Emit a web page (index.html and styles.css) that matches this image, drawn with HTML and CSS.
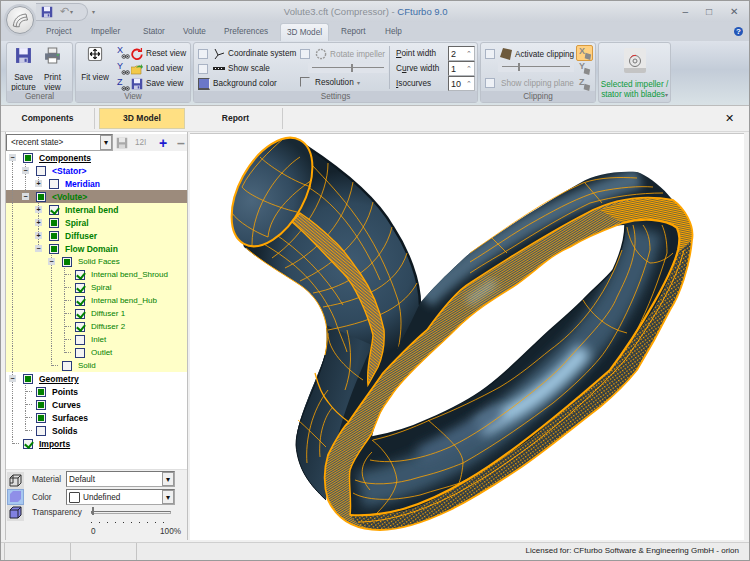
FILE: index.html
```html
<!DOCTYPE html>
<html lang="en">
<head>
    <meta charset="UTF-8">
    <title>Volute3.cft (Compressor) - CFturbo 9.0</title>
    <link rel="stylesheet" href="styles.css">
</head>
<body>
<svg class="defs">
    <symbol id="floppy" viewBox="0 0 16 16">
        <path d="M1 1h14v14H1z" fill="#4a4fa8"/>
        <path d="M4 1h8v6H4z" fill="#eef"/>
        <path d="M4 10h8v5H4z" fill="#c9cbe6"/>
        <path d="M9 11h2v3H9z" fill="#4a4fa8"/>
    </symbol>
    <symbol id="eyes" viewBox="0 0 10 6">
        <circle cx="3" cy="3" r="2.2" fill="none" stroke="#333"/>
        <circle cx="7.4" cy="3" r="2.2" fill="none" stroke="#333"/>
        <circle cx="3" cy="3" r="1" fill="#333"/>
        <circle cx="7.4" cy="3" r="1" fill="#333"/>
    </symbol>
    <symbol id="tile" viewBox="0 0 14 14">
        <path d="M6 5l6 2-1 6-6-2z" fill="#8a8a8a"/>
    </symbol>
</svg>

<div class="window">
    <div class="logo">
        <svg width="24" height="24" viewBox="0 0 24 24" fill="none" stroke="#777" stroke-width="1.2">
            <path d="M3 20C4 11 9 5 20 4M7 21C7 14 11 9 21 8M11 21C11 16 14 12 22 12M3 20L7 21L11 21M20 4L21 8L22 12"/>
        </svg>
    </div>

    <div class="titlebar">
        <div class="quick">
            <svg class="ico12"><use href="#floppy"/></svg>
            <span class="undo">&#8630;</span>
            <span class="small-arrow">&#9662;</span>
        </div>
        <span class="small-arrow qa-more">&#9662;</span>
        <div class="title">Volute3.cft (Compressor) - <span class="title-app">CFturbo 9.0</span></div>
        <div class="winbtns"><span>&#8211;</span><span>&#9633;</span><span>&#10005;</span></div>
    </div>

    <div class="tabs">
        <span class="tab t-project">Project</span>
        <span class="tab t-impeller">Impeller</span>
        <span class="tab t-stator">Stator</span>
        <span class="tab t-volute">Volute</span>
        <span class="tab t-prefs">Preferences</span>
        <span class="tab active">3D Model</span>
        <span class="tab t-report">Report</span>
        <span class="tab t-help">Help</span>
        <span class="help-btn">?</span>
    </div>

    <div class="ribbon">
        <div class="group g-general">
            <div class="group-body">
                <div class="bigbtn">
                    <svg class="ico16"><use href="#floppy"/></svg>
                    <span>Save<br>picture</span>
                </div>
                <div class="bigbtn">
                    <svg class="ico16" viewBox="0 0 16 16">
                        <path d="M4 1h8v5H4z" fill="#eee" stroke="#777"/>
                        <path d="M1 6h14v6H1z" fill="#6d7686"/>
                        <path d="M4 10h8v5H4z" fill="#fff" stroke="#777"/>
                        <path d="M12 7h2v1h-2z" fill="#4c4"/>
                    </svg>
                    <span>Print<br>view</span>
                </div>
            </div>
            <div class="group-label">General</div>
        </div>

        <div class="group g-view">
            <div class="group-body">
                <div class="bigbtn fit">
                    <svg class="ico16 fit-ico" viewBox="0 0 16 16" fill="none" stroke="#111" stroke-width="1.3">
                        <rect x="0.5" y="0.5" width="15" height="15" rx="2" fill="#fff" stroke="#777"/>
                        <path d="M8 2.500v11M2.500 8h11M8 2.500l-2 2M8 2.500l2 2M8 13.500l-2-2M8 13.500l2-2M2.500 8l2-2M2.500 8l2 2M13.500 8l-2-2M13.500 8l-2 2"/>
                    </svg>
                    <span>Fit view</span>
                </div>
                <div class="axes">
                    <div class="axis"><b>X</b><svg class="eyes"><use href="#eyes"/></svg></div>
                    <div class="axis"><b>Y</b><svg class="eyes"><use href="#eyes"/></svg></div>
                    <div class="axis"><b>Z</b><svg class="eyes"><use href="#eyes"/></svg></div>
                </div>
                <div class="col">
                    <div class="line">
                        <svg class="ico12" viewBox="0 0 12 12" fill="none" stroke="#e01818" stroke-width="1.8"><path d="M9.500 3A4.800 4.800 0 1 0 10.800 6.500"/><path d="M7 3.400h3.400V0" stroke-width="1.3"/></svg>
                        Reset view
                    </div>
                    <div class="line">
                        <svg class="ico12" viewBox="0 0 12 12"><path d="M0 4h4l1-1h5v8H0z" fill="#f2c94a" stroke="#a8842a" stroke-width=".6"/><path d="M5 5c2-3 4-3 5-2V1l2 3-2 2V4.500C8 4 6 4 5 5z" fill="#3aa03a"/></svg>
                        Load view
                    </div>
                    <div class="line">
                        <svg class="ico12"><use href="#floppy"/></svg>
                        Save view
                    </div>
                </div>
            </div>
            <div class="group-label">View</div>
        </div>

        <div class="group g-settings">
            <div class="group-body">
                <div class="col set-1">
                    <div class="line">
                        <span class="rcheck"></span>
                        <svg class="ico12" viewBox="0 0 12 12" fill="none" stroke="#222"><path d="M2 1l3 6 6-2M5 7l-3 4"/></svg>
                        Coordinate system
                    </div>
                    <div class="line">
                        <span class="rcheck"></span>
                        <svg class="ico12" viewBox="0 0 12 12"><path d="M0 4h12v3H0z" fill="#222"/><path d="M2 5h1v1H2zM5 5h1v1H5zM8 5h1v1H8z" fill="#fff"/></svg>
                        Show scale
                    </div>
                    <div class="line bg-color">
                        <span class="swatch"></span>
                        Background color
                    </div>
                </div>
                <div class="col set-2">
                    <div class="line dim">
                        <span class="rcheck"></span>
                        <svg class="ico12" viewBox="0 0 12 12" fill="none" stroke="#999" stroke-width="1.4" stroke-dasharray="2 1"><circle cx="6" cy="6" r="4.600"/></svg>
                        Rotate impeller
                    </div>
                    <div class="slider set-slider"><i></i></div>
                    <div class="line res">
                        <span class="rcheck corner"></span>
                        Resolution <span class="small-arrow">&#9662;</span>
                    </div>
                </div>
                <div class="col set-3">
                    <div class="line spin-row"><span><u>P</u>oint width</span><span class="spin">2</span></div>
                    <div class="line spin-row"><span>C<u>u</u>rve width</span><span class="spin">1</span></div>
                    <div class="line spin-row"><span><u>I</u>socurves</span><span class="spin">10</span></div>
                </div>
            </div>
            <div class="group-label">Settings</div>
        </div>

        <div class="group g-clip">
            <div class="group-body">
                <div class="col clip-main">
                    <div class="line">
                        <span class="rcheck"></span>
                        <svg class="ico12" viewBox="0 0 12 12"><path d="M3 0l9 2-2 10-10-3z" fill="#6e5a3c"/></svg>
                        Activate clipping
                    </div>
                    <div class="slider clip-slider"><i></i></div>
                    <div class="line dim">
                        <span class="rcheck"></span>
                        Show clipping plane
                    </div>
                </div>
                <div class="clip-axes">
                    <div class="clip-axis on"><b>X</b><svg class="tile"><use href="#tile"/></svg></div>
                    <div class="clip-axis"><b>Y</b><svg class="tile"><use href="#tile"/></svg></div>
                    <div class="clip-axis"><b>Z</b><svg class="tile"><use href="#tile"/></svg></div>
                </div>
            </div>
            <div class="group-label">Clipping</div>
        </div>

        <div class="group g-selected">
            <div class="sel-btn">
                <svg width="14" height="14" viewBox="0 0 14 14" fill="none" stroke="#777"><circle cx="7" cy="7" r="5.500"/><circle cx="7" cy="7" r="2"/><path d="M2.500 3.500A6 6 0 0 1 8 1.300" stroke="#d33"/></svg>
            </div>
            <div class="sel-text">Selected impeller /<br>stator with blades<span class="small-arrow">&#9662;</span></div>
        </div>
    </div>

    <div class="viewtabs">
        <div class="vtab vt-comp">Components</div>
        <div class="vtab vt-3d">3D Model</div>
        <div class="vtab vt-report">Report</div>
        <div class="vclose">&#10005;</div>
    </div>

    <div class="main">
        <div class="left">
            <div class="tool-row">
                <div class="combo state-combo"><span>&lt;recent state&gt;</span><span class="combo-arrow">&#9662;</span></div>
                <svg class="ico12 tool-save" viewBox="0 0 16 16"><path d="M1 1h14v14H1z" fill="#a9a9a9"/><path d="M4 1h8v6H4z" fill="#e8e8e8"/><path d="M4 10h8v5H4z" fill="#d8d8d8"/></svg>
                <span class="tool-num">12I</span>
                <span class="tool-plus">+</span>
                <span class="tool-minus">&#8211;</span>
            </div>

            <div class="tree">
                <div class="row"><i class="t m first"></i><span class="cb mixed"></span><span class="lbl root">Components</span></div>
                <div class="row"><i class="t v"></i><i class="t m"></i><span class="cb"></span><span class="lbl blue">&lt;Stator&gt;</span></div>
                <div class="row"><i class="t v"></i><i class="t v"></i><i class="t p last"></i><span class="cb"></span><span class="lbl blue">Meridian</span></div>
                <div class="row sel"><i class="t v"></i><i class="t m last"></i><span class="cb mixed"></span><span class="lbl green">&lt;Volute&gt;</span></div>
                <div class="row hl"><i class="t v"></i><i class="t"></i><i class="t p"></i><span class="cb checked"></span><span class="lbl green">Internal bend</span></div>
                <div class="row hl"><i class="t v"></i><i class="t"></i><i class="t p"></i><span class="cb mixed"></span><span class="lbl green">Spiral</span></div>
                <div class="row hl"><i class="t v"></i><i class="t"></i><i class="t p"></i><span class="cb mixed"></span><span class="lbl green">Diffuser</span></div>
                <div class="row hl"><i class="t v"></i><i class="t"></i><i class="t m last"></i><span class="cb mixed"></span><span class="lbl green">Flow Domain</span></div>
                <div class="row hl"><i class="t v"></i><i class="t"></i><i class="t"></i><i class="t m"></i><span class="cb mixed"></span><span class="lbl leaf">Solid Faces</span></div>
                <div class="row hl"><i class="t v"></i><i class="t"></i><i class="t"></i><i class="t v"></i><i class="t b"></i><span class="cb checked"></span><span class="lbl leaf">Internal bend_Shroud</span></div>
                <div class="row hl"><i class="t v"></i><i class="t"></i><i class="t"></i><i class="t v"></i><i class="t b"></i><span class="cb checked"></span><span class="lbl leaf">Spiral</span></div>
                <div class="row hl"><i class="t v"></i><i class="t"></i><i class="t"></i><i class="t v"></i><i class="t b"></i><span class="cb checked"></span><span class="lbl leaf">Internal bend_Hub</span></div>
                <div class="row hl"><i class="t v"></i><i class="t"></i><i class="t"></i><i class="t v"></i><i class="t b"></i><span class="cb checked"></span><span class="lbl leaf">Diffuser 1</span></div>
                <div class="row hl"><i class="t v"></i><i class="t"></i><i class="t"></i><i class="t v"></i><i class="t b"></i><span class="cb checked"></span><span class="lbl leaf">Diffuser 2</span></div>
                <div class="row hl"><i class="t v"></i><i class="t"></i><i class="t"></i><i class="t v"></i><i class="t b"></i><span class="cb"></span><span class="lbl leaf">Inlet</span></div>
                <div class="row hl"><i class="t v"></i><i class="t"></i><i class="t"></i><i class="t v"></i><i class="t l"></i><span class="cb"></span><span class="lbl leaf">Outlet</span></div>
                <div class="row hl"><i class="t v"></i><i class="t"></i><i class="t"></i><i class="t l"></i><span class="cb"></span><span class="lbl leaf">Solid</span></div>
                <div class="row"><i class="t m"></i><span class="cb mixed"></span><span class="lbl root">Geometry</span></div>
                <div class="row"><i class="t v"></i><i class="t b"></i><span class="cb mixed"></span><span class="lbl strong">Points</span></div>
                <div class="row"><i class="t v"></i><i class="t b"></i><span class="cb mixed"></span><span class="lbl strong">Curves</span></div>
                <div class="row"><i class="t v"></i><i class="t b"></i><span class="cb mixed"></span><span class="lbl strong">Surfaces</span></div>
                <div class="row"><i class="t v"></i><i class="t l"></i><span class="cb"></span><span class="lbl strong">Solids</span></div>
                <div class="row"><i class="t l"></i><span class="cb checked"></span><span class="lbl root">Imports</span></div>
            </div>

            <div class="props">
                <div class="prop-icons">
                    <svg width="13" height="13" viewBox="0 0 13 13" fill="none" stroke="#333"><path d="M1 4h8v8H1zM1 4l3-3h8v8l-3 3M9 4l3-3M4 1v8H1"/></svg>
                    <span class="prop-on"><svg width="13" height="13" viewBox="0 0 13 13"><path d="M1 4l3-3h8v8l-3 3H1z" fill="#8f8fe8"/></svg></span>
                    <svg width="13" height="13" viewBox="0 0 13 13"><path d="M1 4l3-3h8v8l-3 3H1z" fill="#8080e0" stroke="#223"/><path d="M1 4h8v8M9 4l3-3" fill="none" stroke="#223"/></svg>
                </div>
                <div class="prop-fields">
                    <div class="prop-row"><span class="prop-label">Material</span><div class="combo prop-combo"><span>Default</span><span class="combo-arrow">&#9662;</span></div></div>
                    <div class="prop-row"><span class="prop-label">Color</span><div class="combo prop-combo"><span class="color-box"></span><span>Undefined</span><span class="combo-arrow">&#9662;</span></div></div>
                    <div class="prop-row trans"><span class="prop-label">Transparency</span>
                        <div class="trans-track">
                            <div class="trans-line"></div>
                            <div class="trans-ticks"></div>
                            <div class="trans-scale"><span>0</span><span>100%</span></div>
                        </div>
                    </div>
                </div>
            </div>
        </div>

        <div class="viewport">
            <svg class="model" viewBox="190 134 554 406">
                <defs>
                    <pattern id="hatch" width="2" height="2" patternUnits="userSpaceOnUse" patternTransform="rotate(-32)">
                        <rect width="2" height="2" fill="#3d5467"/>
                        <rect width="2" height="0.8" fill="#ffa500"/>
                    </pattern>
                    <pattern id="seam" width="2.400" height="2.400" patternUnits="userSpaceOnUse" patternTransform="rotate(40)">
                        <rect width="2.400" height="2.400" fill="#6d6a5c"/>
                        <rect width="2.400" height="1" fill="#e89a10"/>
                    </pattern>
                    <pattern id="speck" width="3" height="3" patternUnits="userSpaceOnUse" patternTransform="rotate(-35)">
                        <rect width="3" height="3" fill="#2b3b47"/>
                        <rect width="1.400" height="1.400" fill="#ffa500"/>
                    </pattern>
                    <pattern id="dense" width="3" height="2" patternUnits="userSpaceOnUse" patternTransform="rotate(12)">
                        <rect width="3" height="2" fill="#5a5a40"/>
                        <rect width="3" height="1.200" fill="#ffa500"/>
                    </pattern>
                    <radialGradient id="faceFill" gradientUnits="userSpaceOnUse" cx="255" cy="178" r="70">
                        <stop offset="0" stop-color="#4b667c"/>
                        <stop offset="0.6" stop-color="#324b60"/>
                        <stop offset="1" stop-color="#182833"/>
                    </radialGradient>
                    <radialGradient id="elbowFill" gradientUnits="userSpaceOnUse" cx="350" cy="265" r="95">
                        <stop offset="0" stop-color="#3f5b72"/>
                        <stop offset="0.65" stop-color="#2f485c"/>
                        <stop offset="1" stop-color="#14222c"/>
                    </radialGradient>
                    <linearGradient id="lowerElbow" gradientUnits="userSpaceOnUse" x1="300" y1="420" x2="380" y2="440">
                        <stop offset="0" stop-color="#1a2b38"/>
                        <stop offset="0.5" stop-color="#2b4254"/>
                        <stop offset="1" stop-color="#15242e"/>
                    </linearGradient>
                    <filter id="blur6" x="-30%" y="-30%" width="160%" height="160%"><feGaussianBlur stdDeviation="6"/></filter>
                    <filter id="blur4" x="-30%" y="-30%" width="160%" height="160%"><feGaussianBlur stdDeviation="4"/></filter>
                    <clipPath id="ringClip">
                        <path d="M420 303C440 280 460 262 470 253C510 225 550 200 580 183C595 175 610 171 637 172C655 178 685 205 692 240C690 265 680 295 670 310C655 340 640 365 637 370C625 385 612 397 600 407C570 430 540 455 517 470C490 488 470 500 450 510C425 522 400 530 380 530C350 530 335 515 328 500C322 480 325 465 328 455C335 440 345 425 348 423C360 405 375 385 383 373C395 355 410 325 420 303Z"/>
                    </clipPath>
                </defs>

                <!-- elbow -->
                <path d="M306 146C335 165 375 195 393 227C408 250 420 280 420 305C420 330 400 360 378 385L350 425L330 460L326 500C310 485 298 470 296 445C296 420 315 385 325 355C332 325 322 300 300 285C285 275 262 262 244 247L236 225Z" fill="url(#elbowFill)"/>
                <path d="M372 345C355 385 335 425 326 500C310 485 298 470 296 445C296 420 315 385 325 355C327 345 327 335 326 325Z" fill="url(#lowerElbow)"/>
                <path d="M306 146C335 165 375 195 393 227C408 250 420 280 420 305" fill="none" stroke="#0d1820" stroke-width="2.500"/>
                <path d="M246 248C262 262 285 275 300 285C322 300 332 325 325 355" fill="none" stroke="#ffa500" stroke-width="1"/>
                <path d="M325 355C318 385 296 420 296 445C298 470 310 485 326 500" fill="none" stroke="#0d1820" stroke-width="1"/>

                <!-- elbow wireframe -->
                <g fill="none" stroke="#ffa500" stroke-width="0.8">
                    <path d="M328 163C328 195 305 235 272 258"/>
                    <path d="M353 182C345 230 306 258 285 268"/>
                    <path d="M373 202C365 240 330 267 300 281"/>
                    <path d="M392 227C383 265 347 287 313 293"/>
                    <path d="M407 253C397 285 363 300 323 307"/>
                    <path d="M417 283C405 305 380 320 328 330"/>
                    <path d="M312 165C340 195 375 230 398 300C402 315 402 330 398 350"/>
                    <path d="M306 186C340 205 365 245 380 280"/>
                    <path d="M262 243C295 262 320 285 335 320C340 335 345 345 347 352"/>
                    <path d="M272 232C300 250 325 275 343 305"/>
                    <path d="M347 330C352 350 352 370 345 390"/>
                    <path d="M328 333C328 350 345 368 363 380"/>
                    <path d="M307 463C305 440 312 410 328 390"/>
                    <path d="M320 457C318 435 325 415 333 407"/>
                    <path d="M298 420C307 428 316 437 326 447"/>
                </g>
                <path d="M315 373C318 385 322 395 328 402C335 412 343 418 350 423" fill="none" stroke="#ffa500" stroke-width="1.300"/>

                <!-- elbow seam strip -->
                <path d="M300 213C315 223 325 232 333 240C345 250 352 263 360 273C372 290 380 310 384 330C385 345 382 358 378 367L368 385C366 365 372 350 373 335C368 315 355 285 343 273C325 255 308 235 292 222Z" fill="url(#seam)" stroke="#ffa500" stroke-width="1.400"/>

                <!-- inlet face -->
                <g transform="rotate(-61.600 272 192)">
                    <ellipse cx="272" cy="192" rx="59" ry="33" fill="url(#faceFill)" stroke="#ffa500" stroke-width="2"/>
                </g>
                <g fill="none" stroke="#ffa500" stroke-width="0.8">
                    <path d="M260 157C268 165 290 180 311 187"/>
                    <path d="M242 187C248 195 275 207 297 212"/>
                    <path d="M232 213C238 222 255 232 268 237"/>
                    <path d="M300 157C280 170 252 205 252 245"/>
                    <path d="M312 180C290 195 270 215 268 237"/>
                    <path d="M283 139C270 150 250 170 242 187"/>
                </g>

                <!-- ring tube -->
                <g clip-path="url(#ringClip)">
                    <rect x="300" y="150" width="400" height="390" fill="#14222c"/>
                    <path d="M360 490C420 480 490 440 560 370C600 330 630 290 645 230" fill="none" stroke="#3a566c" stroke-width="36" filter="url(#blur6)"/>
                    <path d="M425 300C470 255 550 205 640 178" fill="none" stroke="#4a667c" stroke-width="20" filter="url(#blur4)"/>
                    <path d="M480 428C515 412 550 392 585 350" fill="none" stroke="#a4cce6" stroke-width="16" filter="url(#blur6)"/>
                    <path d="M420 455C450 440 475 430 500 410" fill="none" stroke="#44607a" stroke-width="14" filter="url(#blur6)"/>
                </g>

                <!-- hole of the ring -->
                <path d="M372 437C395 433 410 428 427 420C450 410 470 400 487 387C510 370 530 348 550 330C565 317 575 308 583 300C595 287 605 280 613 270C620 255 625 240 625 225C600 226 590 235 570 247C550 255 535 272 513 287C495 298 475 310 455 330C435 350 410 370 393 393C385 403 375 420 372 437Z" fill="#fff"/>
                <path d="M372 437C395 433 410 428 427 420C450 410 470 400 487 387C510 370 530 348 550 330C565 317 575 308 583 300C595 287 605 280 613 270C620 255 625 240 625 225" fill="none" stroke="#0e1a22" stroke-width="1.500"/>

                <!-- ring wireframe -->
                <g fill="none" stroke="#ffa500" stroke-width="0.8">
                    <path d="M373 440C395 435 412 428 430 420C455 410 480 398 500 387C520 375 535 362 550 350C575 332 605 300 622 250"/>
                    <path d="M370 460C395 465 425 458 450 447C475 435 495 420 513 407C535 390 555 375 570 357C590 335 610 315 617 297C628 275 640 250 633 225"/>
                    <path d="M355 480C370 486 395 485 420 477C440 472 450 468 463 463C500 442 530 420 553 403C575 385 590 370 600 358C615 340 640 290 650 250C650 240 648 232 643 225"/>
                    <path d="M353 493C365 500 390 502 420 495C435 490 445 488 460 483C490 468 515 450 540 433C565 412 590 395 605 380C625 358 650 310 667 253C667 240 665 232 662 225"/>
                    <path d="M372 440C385 450 395 465 397 480C396 492 385 505 377 513"/>
                    <path d="M372 452C362 462 357 475 370 490"/>
                    <path d="M428 420C445 435 463 450 463 463C462 475 460 482 457 487"/>
                    <path d="M583 300C590 312 605 328 627 333"/>
                    <path d="M627 227C630 245 640 258 650 263C660 263 668 258 673 253"/>
                    <path d="M470 253C510 225 545 200 583 183C600 177 620 177 637 178"/>
                    <path d="M470 262C490 250 515 232 537 220C560 207 580 197 597 192C620 187 640 186 653 187"/>
                    <path d="M470 273C485 263 500 255 513 247C540 230 565 215 590 203C615 196 640 193 663 193"/>
                    <path d="M492 238L507 253"/>
                    <path d="M585 183L602 203"/>
                </g>

                <!-- ring band -->
                <path fill-rule="evenodd" fill="url(#hatch)" d="M427 330C445 305 458 290 470 283C490 270 550 232 587 213C610 201 640 194 673 200C684 208 695 225 692 240C690 265 680 295 670 310C655 340 640 365 637 370C625 385 612 397 600 407C570 430 540 455 517 470C490 488 470 500 450 510C425 522 400 530 380 530C350 530 335 515 328 500C322 480 325 465 328 455C335 440 345 425 348 423C360 405 375 385 383 373C400 355 415 340 427 330ZM455 330C475 310 495 298 513 287C535 272 550 255 570 247C590 235 610 228 623 223C640 218 665 218 677 228C682 240 680 250 678 253C672 275 660 298 653 310C640 330 625 352 610 370C600 380 570 405 533 437C510 455 485 470 467 480C445 495 420 508 400 512C385 515 365 517 350 515C352 500 348 480 350 470C355 455 365 445 372 433C375 425 378 418 380 413C385 403 390 398 393 393C410 370 435 350 455 330Z"/>
                <path d="M468 302L495 282" fill="none" stroke="#a8d0e8" stroke-width="9" opacity="0.45" filter="url(#blur4)"/>
                <path d="M600 210C625 199 650 196 673 200C684 208 695 225 692 240L678 253C680 245 680 235 677 228C665 218 640 218 623 223Z" fill="url(#dense)"/>
                <path d="M350 515C365 517 385 515 400 512C420 508 445 495 467 480C485 470 510 455 533 437C570 405 600 380 610 370C625 352 640 330 653 310C660 298 672 275 678 253L692 240C690 265 680 295 670 310C655 340 640 365 637 370C625 385 612 397 600 407C570 430 540 455 517 470C490 488 470 500 450 510C425 522 400 530 375 529C362 528 352 520 350 515Z" fill="url(#speck)"/>
                <g fill="none" stroke="#ffa500">
                    <path d="M427 330C445 305 458 290 470 283C490 270 550 232 587 213C610 201 640 194 673 200C684 208 695 225 692 240C690 265 680 295 670 310C655 340 640 365 637 370C625 385 612 397 600 407C570 430 540 455 517 470C490 488 470 500 450 510C425 522 400 530 380 530C350 530 335 515 328 500C322 480 325 465 328 455C335 440 345 425 348 423C360 405 375 385 383 373C400 355 415 340 427 330" stroke-width="1.800"/>
                    <path d="M455 330C475 310 495 298 513 287C535 272 550 255 570 247C590 235 610 228 623 223" stroke-width="1.500"/>
                    <path d="M372 433C375 425 378 418 380 413C385 403 390 398 393 393C410 370 435 350 455 330" stroke-width="1.500"/>
                    <path d="M350 515C352 500 348 480 350 470C355 455 365 445 372 433" stroke-width="1.500"/>
                    <path d="M350 515C385 517 420 508 467 480C510 455 570 405 610 370C640 330 672 275 678 250C680 240 680 235 677 228C665 218 640 218 623 223" stroke-width="2.200"/>
                    <path d="M358 522C395 522 440 505 480 480C530 450 590 400 625 360C650 325 675 285 684 250" stroke-width="1"/>
                </g>
            </svg>
        </div>
    </div>

    <div class="status">
        <div class="st st-1"></div>
        <div class="st st-2"></div>
        <div class="st st-3">Licensed for: CFturbo Software &amp; Engineering GmbH - orion</div>
    </div>
</div>
</body>
</html>
```

FILE: styles.css
```css
* {
    box-sizing: border-box;
}

body {
    margin: 0;
    font-family: "Liberation Sans", Arial, sans-serif;
    font-size: 8.200px;
    color: #222;
}

.defs {
    display: none;
}

.window {
    position: relative;
    width: 750px;
    height: 561px;
    display: flex;
    flex-direction: column;
    overflow: hidden;
    background: #f0f0f0;
    border: 1px solid #9a9a9a;
    border-bottom: 0;
}

.ico12 {
    width: 12px;
    height: 12px;
    flex: none;
}

.ico16 {
    width: 17px;
    height: 17px;
    display: block;
    margin: 0 auto;
}

.small-arrow {
    font-size: 6px;
    color: #777;
}

/* title bar */
.logo {
    position: absolute;
    left: 5px;
    top: 5px;
    width: 28px;
    height: 28px;
    border-radius: 50%;
    background: radial-gradient(circle at 50% 30%, #fafafa, #d5d5d5);
    border: 1px solid #9aa0a8;
    box-shadow: 0 0 0 2px #c7ccd4;
    display: flex;
    align-items: center;
    justify-content: center;
}

.logo svg {
    width: 18px;
    height: 18px;
}

.titlebar {
    height: 21px;
    display: flex;
    align-items: center;
    padding-left: 35px;
    background: linear-gradient(#e3e6ea, #cdd2da);
}

.quick {
    width: 52px;
    height: 18px;
    display: flex;
    align-items: center;
    gap: 9px;
    padding-left: 5px;
    border: 1px solid #b4b9c2;
    border-left: 0;
    border-radius: 0 10px 10px 0;
    background: #d5d9e0;
}

.undo {
    font-size: 11px;
    color: #8e8e8e;
    margin-left: -2px;
}

.quick .small-arrow {
    margin-left: -8px;
}

.qa-more {
    margin-left: 4px;
}

.title {
    flex: 1;
    text-align: center;
    font-size: 9.500px;
    color: #8a8f96;
    padding-right: 46px;
}

.title-app {
    color: #3e6fa8;
}

.winbtns {
    display: flex;
    gap: 18px;
    padding-right: 11px;
    font-size: 10px;
    color: #5c6470;
}

/* ribbon tabs */
.tabs {
    height: 19px;
    display: flex;
    align-items: center;
    background: #ced3db;
    padding-left: 45px;
    color: #56606e;
}

.t-project { width: 45px; }
.t-impeller { width: 52px; }
.t-stator { width: 40px; }
.t-volute { width: 41px; }
.t-prefs { width: 56px; }

.tab.active {
    width: 49px;
    height: 18px;
    margin-top: 1px;
    line-height: 18px;
    text-align: center;
    background: linear-gradient(#f1f3f7, #e0e5ec);
    border-radius: 3px 3px 0 0;
    border: 1px solid #c2c8d1;
    border-bottom: 0;
}

.t-report {
    margin-left: 12px;
    width: 44px;
}

.t-help {
    flex: 1;
}

.help-btn {
    width: 9px;
    height: 9px;
    margin-right: 6px;
    border-radius: 50%;
    background: #2356b8;
    color: #fff;
    font-size: 8px;
    font-weight: bold;
    line-height: 9px;
    text-align: center;
}

/* ribbon */
.ribbon {
    height: 65px;
    display: flex;
    gap: 2px;
    padding: 0 0 2px 5px;
    background: linear-gradient(#dde2ea, #c3ccd8 45%, #d9e2e6);
    border-bottom: 1px solid #bcbcbc;
}

.group {
    display: flex;
    flex-direction: column;
    margin-top: 1px;
    border: 1px solid #bcc2cb;
    border-radius: 3px;
    background: linear-gradient(#e6eaf0, #ccd3dc);
}

.group-body {
    flex: 1;
    display: flex;
    min-height: 0;
}

.group-label {
    height: 11px;
    line-height: 11px;
    text-align: center;
    color: #666;
    background: #c6ccd6;
}

.g-general { width: 67px; }
.g-view { width: 116px; }
.g-settings { width: 285px; }
.g-clip { width: 116px; }
.g-selected { width: 73px; align-items: center; }

.bigbtn {
    width: 29px;
    padding-top: 4px;
    text-align: center;
    line-height: 9.500px;
}

.bigbtn span {
    display: block;
    margin-top: 9px;
}

.g-general .group-body {
    padding-left: 2px;
}

.fit {
    width: 36px;
    margin-left: 1px;
}

.fit-ico {
    width: 16px;
    height: 14px;
}

.fit span {
    margin-top: 12px;
}

.axes {
    width: 18px;
    padding: 2px 0 0 4px;
}

.axis {
    height: 16px;
    position: relative;
    color: #2230a0;
    font-size: 9px;
    line-height: 11px;
}

.axis b {
    font-weight: normal;
}

.eyes {
    position: absolute;
    left: 4px;
    top: 9px;
    width: 9px;
    height: 5px;
}

.col {
    display: flex;
    flex-direction: column;
    padding-top: 3px;
}

.line {
    height: 16px;
    display: flex;
    align-items: center;
    gap: 3px;
    white-space: nowrap;
}

.dim {
    color: #9a9a9a;
}

.rcheck {
    width: 10px;
    height: 10px;
    flex: none;
    margin-right: 2px;
    border: 1px solid #a9b3c4;
    background: #eef1f6;
}

.rcheck.corner {
    border-color: #777 transparent transparent #777;
    background: transparent;
}

.set-1 {
    width: 105px;
    padding-left: 4px;
}

.swatch {
    width: 12px;
    height: 12px;
    background: #6b78c8;
    border: 1px solid #555;
    border-right-color: #eee;
    border-bottom-width: 2px;
}

.set-2 {
    width: 91px;
    padding-left: 1px;
    border-right: 1px solid #b4bbc6;
    margin: 3px 0 2px;
    padding-top: 0;
}

.slider {
    position: relative;
    height: 10px;
    background: #dfe3ea;
}

.slider::before {
    content: "";
    position: absolute;
    left: 4px;
    right: 4px;
    top: 4px;
    height: 1px;
    background: #8a8a8a;
}

.slider i {
    position: absolute;
    top: 1px;
    width: 2px;
    height: 8px;
    background: #888;
}

.set-slider {
    width: 80px;
    margin: 1px 0 2px 8px;
}

.set-slider i {
    left: 43px;
}

.res {
    height: 14px;
}

.set-3 {
    flex: 1;
    padding-left: 6px;
}

.spin-row {
    justify-content: space-between;
    padding-right: 2px;
}

.spin {
    width: 27px;
    height: 15px;
    padding-left: 2px;
    line-height: 14px;
    font-size: 9px;
    color: #222;
    background: #fff;
    border: 1px solid #b4b8bd;
    border-left-color: #666;
    border-top-color: #666;
    position: relative;
}

.spin::after {
    content: "\2303";
    position: absolute;
    right: 2px;
    top: 0;
    font-size: 7px;
    color: #666;
}

.clip-main {
    width: 95px;
    padding-left: 4px;
}

.clip-slider {
    width: 76px;
    margin: 0 0 4px 13px;
}

.clip-slider i {
    left: 20px;
}

.clip-main .line:last-child {
    height: 14px;
}

.clip-main .line:last-child .rcheck {
    margin-right: 3px;
}

.clip-axes {
    width: 17px;
    padding-top: 2px;
}

.clip-axis {
    width: 17px;
    height: 16px;
    position: relative;
    font-size: 9px;
    padding-left: 3px;
    color: #8a8a8a;
    border-radius: 2px;
}

.clip-axis b {
    font-weight: bold;
    line-height: 11px;
}

.clip-axis.on {
    background: #ffd080;
    border: 1px solid #d89a40;
    padding-left: 2px;
}

.tile {
    position: absolute;
    left: 3px;
    top: 2px;
    width: 13px;
    height: 13px;
}

.sel-btn {
    width: 22px;
    height: 25px;
    margin-top: 5px;
    display: flex;
    align-items: center;
    justify-content: center;
    background: linear-gradient(#e8e8e8 80%, #c4c4c4 80%);
    border-radius: 2px;
}

.sel-text {
    margin-top: 7px;
    text-align: center;
    line-height: 9.500px;
    white-space: nowrap;
    color: #0c9a3a;
}

/* view tabs */
.viewtabs {
    height: 25px;
    display: flex;
    align-items: center;
    background: #f0f0f0;
}

.vtab {
    height: 21px;
    line-height: 21px;
    text-align: center;
    font-size: 8.500px;
    font-weight: bold;
}

.vt-comp {
    width: 94px;
    border-right: 1px solid #ccc;
}

.vt-3d {
    width: 86px;
    margin-left: 4px;
    background: #ffe083;
    border: 1px solid #d8d0a8;
    line-height: 19px;
}

.vt-report {
    width: 94px;
    margin-left: 4px;
    border-right: 1px solid #ccc;
}

.vclose {
    margin-left: auto;
    margin-right: 15px;
    font-size: 11px;
    color: #111;
}

/* main */
.main {
    flex: 1;
    min-height: 0;
    display: flex;
    padding: 0 5px 2px 4px;
    border-top: 1px solid #d8d8d8;
}

.left {
    width: 183px;
    display: flex;
    flex-direction: column;
    background: #fff;
    border-left: 1px solid #c0c0c0;
    border-right: 1px solid #c0c0c0;
}

.tool-row {
    height: 17px;
    flex: none;
    display: flex;
    align-items: center;
    background: #f0f0f0;
    margin-top: 2px;
}

.combo {
    display: flex;
    align-items: center;
    background: #fff;
    border: 1px solid #a8a8a8;
    border-top-color: #777;
    border-left-color: #777;
}

.state-combo {
    width: 107px;
    height: 17px;
    padding-left: 4px;
    margin-right: 3px;
}

.combo-arrow {
    margin-left: auto;
    width: 12px;
    height: 100%;
    background: #f0f0f0;
    border: 1px solid #999;
    text-align: center;
    line-height: 13px;
    font-size: 8px;
    color: #111;
}

.tool-save {
    margin-right: 7px;
}

.tool-num {
    width: 20px;
    color: #999;
}

.tool-plus {
    margin-left: 4px;
    width: 18px;
    font-size: 14px;
    font-weight: bold;
    color: #1a1ad0;
    line-height: 10px;
}

.tool-minus {
    font-size: 14px;
    font-weight: bold;
    color: #888;
    line-height: 10px;
}

.tree {
    flex: 1;
    min-height: 0;
    font-size: 8.500px;
}

.row {
    height: 13px;
    display: flex;
    align-items: center;
    white-space: nowrap;
}

.row.sel {
    background: #9c8b7c;
}

.row.hl {
    background: #ffffc8;
}

.t {
    position: relative;
    width: 13px;
    height: 13px;
    flex: none;
}

.t.v::before,
.t.b::before,
.t.l::before,
.t.m::before,
.t.p::before {
    content: "";
    position: absolute;
    left: 6px;
    top: 0;
    bottom: 0;
    border-left: 1px dotted #8c8c8c;
}

.t.l::before,
.t.last::before {
    bottom: 6px;
}

.t.first::before {
    top: 6px;
    bottom: 0;
}

.t.b::after,
.t.l::after {
    content: "";
    position: absolute;
    left: 7px;
    right: 0;
    top: 6px;
    border-top: 1px dotted #8c8c8c;
}

.t.m::after,
.t.p::after {
    position: absolute;
    left: 3px;
    top: 3px;
    width: 7px;
    height: 7px;
    background: #d9dde2;
    color: #222;
    font: bold 7px/7px "Liberation Sans", sans-serif;
    text-align: center;
}

.t.m::after {
    content: "\2212";
}

.t.p::after {
    content: "+";
}

.cb {
    position: relative;
    width: 10px;
    height: 10px;
    flex: none;
    margin-left: 4px;
    background: #f4f4f4;
    border: 1px solid #2a3a7a;
}

.cb.mixed::after {
    content: "";
    position: absolute;
    left: 1px;
    top: 1px;
    width: 6px;
    height: 6px;
    background: #008000;
}

.cb.checked::after {
    content: "";
    position: absolute;
    left: 2px;
    top: 0;
    width: 4px;
    height: 6px;
    border: solid #008000;
    border-width: 0 2px 2px 0;
    transform: rotate(40deg);
}

.lbl {
    margin-left: 6px;
}

.root {
    font-weight: bold;
    color: #000;
    text-decoration: underline;
}

.strong {
    font-weight: bold;
    color: #000;
}

.blue {
    font-weight: bold;
    color: #0000ff;
}

.green {
    font-weight: bold;
    color: #008000;
}

.leaf {
    font-size: 8px;
    color: #008000;
}

/* material panel */
.props {
    height: 71px;
    flex: none;
    display: flex;
    background: #f0f0f0;
    border-top: 1px solid #e0e0e0;
}

.prop-icons {
    width: 17px;
    height: 49px;
    margin: 2px 0 0 1px;
    display: flex;
    flex-direction: column;
    align-items: center;
    justify-content: space-between;
    padding: 2px 0;
    background: #dedede;
}

.prop-on {
    width: 17px;
    height: 16px;
    display: flex;
    align-items: center;
    justify-content: center;
    background: #a8c8f0;
    border: 1px solid #88a8d8;
}

.prop-fields {
    margin-left: 8px;
}

.prop-row {
    display: flex;
    align-items: center;
    margin-top: 2px;
    height: 16px;
}

.prop-row:first-child {
    margin-top: 1px;
}

.prop-label {
    width: 34px;
    color: #333;
}

.prop-combo {
    width: 109px;
    height: 16px;
    padding-left: 2px;
}

.color-box {
    width: 11px;
    height: 11px;
    margin-right: 3px;
    background: #fff;
    border: 1px solid #444;
    border-radius: 1px;
}

.trans {
    align-items: flex-start;
}

.trans .prop-label {
    margin-top: 1px;
    width: 60px;
}

.trans-track {
    position: relative;
    width: 90px;
    margin-left: -1px;
}

.trans-line {
    width: 80px;
    height: 3px;
    margin-top: 4px;
    border: 1px solid #aaa;
    border-left-color: #777;
    border-top-color: #777;
}

.trans-line::before {
    content: "";
    position: absolute;
    left: 1px;
    top: 0;
    width: 2px;
    height: 8px;
    background: #777;
}

.trans-ticks {
    width: 80px;
    height: 1px;
    margin-top: 8px;
    background: repeating-linear-gradient(90deg, #333 0 1px, transparent 1px 8px);
}

.trans-scale {
    display: flex;
    justify-content: space-between;
    margin-top: 4px;
    color: #333;
}

/* 3d view */
.viewport {
    flex: 1;
    min-width: 0;
    margin: 1px 0 0 2px;
    background: #fff;
    border-top: 1px solid #c8c8c8;
}

.model {
    display: block;
    width: 100%;
    height: 100%;
}

/* status bar */
.status {
    height: 19px;
    flex: none;
    display: flex;
    background: #ececec;
    border-top: 1px solid #cfcfcf;
    border-bottom: 1px solid #9a9a9a;
    padding-left: 3px;
}

.st {
    border-left: 1px solid #c4c4c4;
}

.st-1,
.st-2 {
    width: 66px;
}

.st-3 {
    flex: 1;
    font-size: 8px;
    line-height: 15px;
    text-align: right;
    padding-right: 10px;
    color: #222;
}
```
